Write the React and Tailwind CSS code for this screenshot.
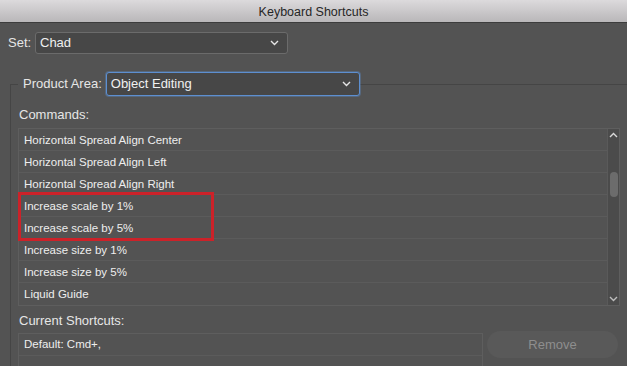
const commands = [
  'Horizontal Spread Align Center',
  'Horizontal Spread Align Left',
  'Horizontal Spread Align Right',
  'Increase scale by 1%',
  'Increase scale by 5%',
  'Increase size by 1%',
  'Increase size by 5%',
  'Liquid Guide',
];

const Chevron = ({ up = false, className = '' }) => (
  <svg width="9" height="6" viewBox="0 0 9 6" className={className}>
    <path
      d={up ? 'M1 5 L4.5 1.5 L8 5' : 'M1 1 L4.5 4.5 L8 1'}
      fill="none"
      stroke="currentColor"
      strokeWidth="1.4"
    />
  </svg>
);

const Select = ({ value, className = '' }) => (
  <div
    className={`flex items-center justify-between rounded-[3px] bg-[#474747] pl-[4px] pr-[8px] text-[13px] text-[#f0f0f0] ${className}`}
  >
    <span>{value}</span>
    <Chevron className="text-[#e6e6e6]" />
  </div>
);

export default function App() {
  return (
    <div
      className="relative h-[366px] w-[627px] overflow-hidden bg-[#535353]"
      style={{ fontFamily: '"Liberation Sans", Arial, sans-serif' }}
    >
      {/* Title bar */}
      <div className="flex h-[23px] items-center justify-center border-b border-[#3c3c3c] bg-gradient-to-b from-[#dcdadc] to-[#b9b7b9] pt-[2px] text-[12.5px] text-[#262626]">
        Keyboard Shortcuts
      </div>

      {/* Set */}
      <div className="mt-[9px] flex items-center pl-[8px] text-[13px] text-[#e6e6e6]">
        <span className="w-[27px]">Set:</span>
        <Select value="Chad" className="h-[22px] w-[253px] border border-[#6b6b6b]" />
      </div>

      {/* Product area group */}
      <fieldset className="ml-[10px] mt-[18px] w-[640px] border border-[#454545] pb-[8px] pl-[7px] pr-[7px]">
        <legend className="flex items-center pl-[5px] text-[13px] text-[#e6e6e6]">
          <span className="mr-[4px]">Product Area:</span>
          <Select
            value="Object Editing"
            className="h-[24px] w-[254px] border border-[#5d8fd0] shadow-[0_0_0_1px_rgba(93,143,208,0.35)]"
          />
        </legend>

        <div className="mt-[11px] pl-[1px] text-[13px] leading-[16px] text-[#e6e6e6]">
          Commands:
        </div>

        {/* Commands list */}
        <div className="relative mt-[5px] flex w-[602px] border border-[#5e5e5e]">
          <div className="flex-1">
            {commands.map((c) => (
              <div
                key={c}
                className="flex h-[22px] items-center border-b border-[#5b5b5b] pl-[5px] pt-[2px] text-[11.5px] text-[#eeeeee] last:border-b-0"
              >
                {c}
              </div>
            ))}
          </div>
          <div className="flex w-[12px] flex-col items-center border-l border-[#5a5a5a] bg-[#4b4b4b] py-[3px]">
            <Chevron up className="text-[#dadada]" />
            <div className="mt-[34px] h-[25px] w-[8px] rounded-full bg-[#6c6c6c]" />
            <div className="flex-1" />
            <Chevron className="text-[#bdbdbd]" />
          </div>
          <div className="absolute left-[-1px] top-[63px] h-[49px] w-[196px] border-[3px] border-[#cc2229]" />
        </div>

        <div className="mt-[7px] pl-[1px] text-[13px] leading-[16px] text-[#e6e6e6]">
          Current Shortcuts:
        </div>

        <div className="mt-[4px] flex items-start">
          <div className="w-[465px] border border-[#5e5e5e]">
            <div className="flex h-[22px] items-center border-b border-[#5b5b5b] pl-[5px] pt-[1px] text-[11.5px] text-[#eeeeee]">
              Default: Cmd+,
            </div>
            <div className="h-[22px]" />
          </div>
          <button className="ml-[4px] mt-[-2px] h-[27px] w-[131px] rounded-full bg-[#595959] text-[13px] text-[#8e8e8e]">
            Remove
          </button>
        </div>
      </fieldset>
    </div>
  );
}
